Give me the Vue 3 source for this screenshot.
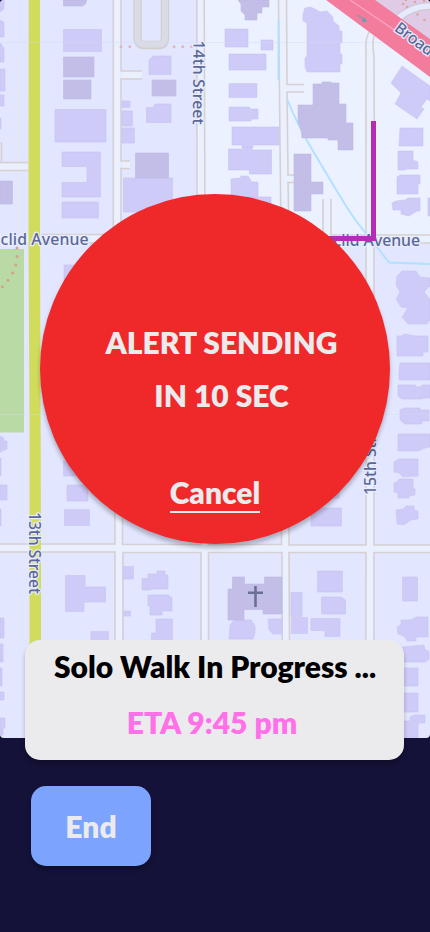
<script setup>
const streets = [
  { name: '14th Street', x: 193.5, y: 40.5, angle: 90.5, length: 84 },
  { name: '13th Street', x: 28.5, y: 512, angle: 90, length: 82 },
  { name: '15th Street', x: 376, y: 495, angle: -90, length: 83 },
  { name: 'clid Avenue', x: 0.5, y: 245, angle: 0, length: 88 },
  { name: 'Euclid Avenue', x: 315, y: 245.5, angle: 0, length: 105 },
  { name: 'Broad', x: 393.5, y: 30, angle: 37, length: 44 },
]

const lightBuildings = [
  // west of 13th Street
  'M0 0h4v9l-4 3z', 'M0 20l4 2v15h-4z', 'M0 43l4 5v14h-4z', 'M0 69h5v22h-5z', 'M0 95h4v11h-4z', 'M0 118h1v11h-1z',
  'M0 436l4 2v3h3v8l-7 3z', 'M0 458h1v18h-1z', 'M0 485h7v15h-7z', 'M0 509h1v17h-1z', 'M0 618h4v20h-4z', 'M0 644h3v18h-3z', 'M0 668h2v18h-2z', 'M0 692h4v8h-4z', 'M0 718h5v10h-2v7h-3z',
  // between 13th and 14th, north
  'M63.5 29.5h38v22h-38z', 'M55 109.5h51v32.5h-51z', 'M62 152h38.5v45h-38.5v-14.5h25v-16h-25z', 'M62 202h36.5v16h-36.5z', 'M64 265h12v17h-12z',
  'M149 60l4-4h18v18.500h-22z', 'M122 101h8v6.500h-8z', 'M122 111h10.500v15h-10.500z', 'M122 128h12.500v15h-12.500z', 'M146.500 107.500h6.500l2-3.500h16v18.500h-24.500z', 'M123.500 178h49v34h-49z',
  // north centre
  'M225 29h23v18h-23z', 'M261 40h12v10h-12z', 'M229 54h37v16h-37z', 'M229 83.500h28v14h-28z', 'M229 107h20l2 2h7v10h-7v2h-22z', 'M232 127h47v18h-26v3h-11v-3h-10z', 'M228.500 149h15v-2h7l2 3h19v24h-22v-4h-21z', 'M231 179l9-1 1-2h7l4 6h6v16h-27z', 'M246 197h25v8h-20z',
  'M303 14l2-6 5-1 5 2 5 3 7-1 6 6v4l6 5v5h3v12h-2v11h2v10h-2v8h-33l-2-5v-9l2-2V23l-4-2z',
  // east side, north
  'M402 66l28 20v15l-3-2-6 8 3 2-7 10-22-15 6-11-10-10z', 'M400 128h23v18h-24z', 'M398 151h15v9l5 2v7h-10l-4 1h-6z', 'M397 177l3-2h20v9h-2v10h-21z', 'M392 203l4-2 9-1 3-2h12v13h-3l-8 5-8-2v-4h-8z', 'M428 198h2v18h-2z',
  // east side, south
  'M397 276l5-5h14l4 6 10 1v8l-6 6 6 7v21l-3 4h-19l-6-7 6-9-7-1-5-8 4-7-4-7z', 'M397 336h5l2-2 12 2h12v16h-5v4h-26z', 'M400 363h30v17h-31v-9z', 'M398 385h17l2 2h3l2-2h8v13h-7v1h-21l-4-3z', 'M400 410l4-2h16v2h9v11h-7v3h-17l-5-4z', 'M398 434h32v13l-5 1-7 3h-20z', 'M394 462l5-3h19v17l-15 1-4-4-5-1z', 'M394 483l4-2 1-2h14v8l2 2v6l-6 1v2h-11v-5l-4-1z', 'M396 510l7-1 3-3h8v4l4 1v8l-7 1-7 5-7-1z',
  // lower west blocks
  'M63.500 461h22v15h-22z', 'M67 485h21v16h-21z', 'M64.500 509.500h25v16h-25z', 'M65.500 575.500h19.500v11.500h20.500v15h-21.500v9.500h-18.500z', 'M91 631.500h17.500v12h-17.500z',
  'M123 566.500h10.500v12.500h-10.500z', 'M142 578.500h6v-4.500h9v-3h8v4h3v14h-15l-3 1h-8z', 'M148 595h21v2h3v14h-10v4h-12v-9h-2z', 'M124 611h6.500v5h-6.500z', 'M156 619h16.500v25h-21v-11h4.500z',
  // lower centre blocks
  'M330 480l10 5-1 13-14 2z', 'M311 508h30.500v18h-30.500z', 'M317.500 571h25v21h-25z', 'M321.500 597h20l4 3v14h-24z', 'M291 592.500h11v24h-11z', 'M291.500 617.500h16v16h-16z', 'M311 618.500h29v18h-15v-6h-14z', 'M230 625l4-5h17l4 6v7l-2 6h-24z', 'M268 619h14v15h-9l-4-4z',
  // lower east block
  'M402.500 577h15v24h-15z', 'M401 620h10l5-3h12v20h-12v4h-9l-3-5-6-2-1-7 4-2z', 'M402 647l22-2 1 5 4 1v8l-4 3h-23z', 'M403 668h15v18h-15z', 'M403 693h15v19h-15z', 'M410 717l4-2h11v8h-7v15h-15v-17h7z',
]

const darkBuildings = [
  'M63.500 0h23l-1 4-3 2h-19z', 'M63.500 57h30.500v20h-30.500z', 'M63.500 80h27.500v19h-27.500z', 'M152 80h24v16h-24z', 'M135.500 153h33v25h-33z', 'M0 181h12.500v23h-12.500z',
  'M238 0h31v7h-7v6h-5v7h-12v-5l-4-4v-7z', 'M313 84h9v-2h9v1h8v21h7v19h7v27h-15v-10h-10v-2h-26l-1-8-3-8v-17h15z', 'M294 154h17v28h12v12h-12v17h-17z',
  'M232.500 577h12v7h20v-7h17.500v37h-19v-4.500h-19v10.500h-16v-31h4.500z',
]
</script>

<template>
  <main class="screen">
    <section class="map-panel">
      <svg class="map" viewBox="0 0 430 738" aria-label="Street map">
        <rect width="430" height="738" fill="#e2e6ff" />
        <path d="M205 0H430V236H205z" fill="#ebf1ff" />
        <path d="M0 249H24V432.500H0z" fill="#b9d9a5" />

        <g class="soft" fill="none">
          <g stroke="#ebf0ff" stroke-width="7">
            <path d="M117.300 0V236M118.700 243V738M200.500 0L201 236L205 553V738M282.500 0L284 236L286 738M370 42L369.800 738" />
            <path d="M0 239H430M0 548.500H430M0 167H28M122 75H142M122 164.500H130M287 88.500H304M288 179H296M327 199V236" />
          </g>
          <g stroke="#d6d0d2" stroke-width="1.600">
            <path d="M113.300 0V234.500H41M121 0V71H142M142 79H121V161H130M130 168.500H121V234.500H197L196.800 0M204.200 0L205 234.500H281L278.500 0M286.500 0L287 84.500H304M304 92H287L288 175H296M296 182.500H288L289 234.500H323V199M331 199V235H366V50Q365 40 369 32M374 36Q372 43 374 57L374.500 235H430" />
            <path d="M0 162.500H28M0 170.500H28M1.500 142V162" />
            <path d="M41 243H114L115 544H0M430 243H374L374 545H430M122.500 500V544.500H201V500M208.500 500V544.500H281.500V500M289 500V545H366V243" />
            <path d="M0 552H115V738M123 738V552.500H201V738M208.500 738V552.500H282L282.500 738M290 738L289 552.500H366L365.500 738M374 738V552.500H430" />
          </g>
          <path d="M137.500 0V37Q137.500 45 144 45H159Q165 45 165 37V0" stroke="#d2cece" stroke-width="8.500" />
          <path d="M137.500 0V37Q137.500 44.500 144 44.500H159Q165 44.500 165 37V0" stroke="#dadce5" stroke-width="6" />
          <path d="M121 46.800H134M174 46.800H193" stroke="#e1b7bd" stroke-width="3" stroke-linecap="round" stroke-dasharray="0 8.800" />
          <path d="M17 248Q18 257 15 268Q10 280 0 289" stroke="#d79f87" stroke-width="3" stroke-linecap="round" stroke-dasharray="0 8.600" />
          <path d="M278.500 20V80M287.500 100Q298 126 313 151Q335 188 346 206Q358 225 371 239L389 262.500L430 264" stroke="#b0e1fe" stroke-width="1.900" />
        </g>

        <g class="soft">
          <path v-for="shape in lightBuildings" :key="shape" :d="shape" class="building" />
          <path v-for="shape in darkBuildings" :key="shape" :d="shape" class="building building-dark" />
        </g>

        <path d="M28.700 0H40V235L41 560V738H29.500V420L28.500 235z" fill="#d1db5c" />
        <path d="M0 42.500H430M0 414.500H430" stroke="#d1dcf3" stroke-width=".7" opacity=".6" />

        <g class="soft">
          <path d="M370 0H430V42z" fill="#dfcbe5" />
          <path d="M396 20Q411 6 430 6" fill="none" stroke="#cfc8d3" stroke-width="8" />
          <path d="M396 20Q411 6 430 6" fill="none" stroke="#e5ebfd" stroke-width="5.500" />
          <path d="M326 0H375L430 39V77z" fill="#f37c9d" />
          <path d="M350 0L430 54" fill="none" stroke="#f9a8c0" stroke-width="1.200" />
          <path d="M357.500 15L363 19" fill="none" stroke="#a78ba8" stroke-width="1.600" />
          <path d="M367 22L361 21.500L364.500 17z" fill="#6d9cb8" />
          <g fill="#d6a6a4">
            <circle cx="403" cy="4" r="1.300" /><circle cx="407" cy="7" r="1.300" /><circle cx="406" cy="0" r="1.300" /><circle cx="415" cy="2" r="1.300" /><circle cx="424" cy="1" r="1.300" /><circle cx="417.500" cy="14.500" r="1.300" /><circle cx="424.500" cy="20" r="1.300" />
          </g>
        </g>

        <path d="M255.500 586V607M248 592.700H263" fill="none" stroke="#68709a" stroke-width="2.600" />
        <text
          v-for="street in streets"
          :key="street.name + street.x"
          class="street-name"
          :transform="`translate(${street.x} ${street.y}) rotate(${street.angle})`"
          :textLength="street.length"
        >{{ street.name }}</text>
        <path d="M373.500 121V238.500H310" fill="none" stroke="#b32db5" stroke-width="5" />
      </svg>

      <div class="alert">
        <p class="alert-message">ALERT SENDING<br />IN 10 SEC</p>
        <button class="cancel">Cancel</button>
      </div>

      <div class="trip-card">
        <h1 class="trip-title">Solo Walk In Progress ...</h1>
        <p class="trip-eta">ETA 9:45 pm</p>
      </div>
    </section>

    <footer class="actions">
      <button class="end">End</button>
    </footer>
  </main>
</template>

<style>
body {
  background: #151239;
}
</style>

<style scoped>
.screen {
  width: 430px;
  height: 932px;
  overflow: hidden;
  background: #151239;
  font-family: Lato, sans-serif;
  font-size: 30px;
  font-weight: 800;
}

.map-panel {
  position: relative;
  height: 738px;
}

.map {
  display: block;
  width: 430px;
  height: 738px;
  border-radius: 4px;
}

.soft {
  filter: blur(0.4px);
}

.building {
  fill: #cecbf8;
  stroke: #c9c5f2;
  stroke-width: 0.6;
}

.building-dark {
  fill: #c3bee7;
  stroke: #beb8e2;
}

.street-name {
  fill: #5b6796;
  stroke: #e8edff;
  stroke-width: 2.5px;
  stroke-linejoin: round;
  paint-order: stroke;
  font-family: "Noto Sans", sans-serif;
  font-size: 15.8px;
  font-weight: 500;
}

.alert {
  position: absolute;
  top: 194px;
  left: 40px;
  box-sizing: border-box;
  display: flex;
  flex-direction: column;
  align-items: center;
  width: 350px;
  height: 350px;
  padding: 122px 0 0 13px;
  border-radius: 50%;
  background: #ef292a;
  box-shadow: 0 4px 4px rgba(0, 0, 0, 0.25);
  color: #ebebed;
}

.alert-message {
  margin: 0;
  line-height: 53px;
  text-align: center;
}

button {
  padding: 0;
  border: 0;
  background: none;
  color: #ebebed;
  font: inherit;
}

.cancel {
  box-sizing: border-box;
  height: 38px;
  margin: 53px 13px 0 0;
  padding-bottom: 2px;
  border-bottom: 2px solid #ebebed;
  line-height: 34px;
}

.trip-card {
  position: absolute;
  top: 640px;
  left: 25px;
  box-sizing: border-box;
  width: 379px;
  height: 120px;
  border-radius: 15px;
  background: #ebebed;
  box-shadow: 0 4px 4px rgba(0, 0, 0, 0.25);
  text-align: center;
}

.trip-title,
.trip-eta {
  margin: 0;
  font: inherit;
}

.trip-title {
  padding-left: 1px;
  color: #000;
  line-height: 52px;
}

.trip-eta {
  padding-right: 5px;
  color: #ff70e9;
  line-height: 60px;
}

.actions {
  padding: 48px 31px;
}

.end {
  width: 120px;
  height: 80px;
  border-radius: 15px;
  background: #7ca4ff;
  box-shadow: 0 4px 4px rgba(0, 0, 0, 0.25);
}
</style>
